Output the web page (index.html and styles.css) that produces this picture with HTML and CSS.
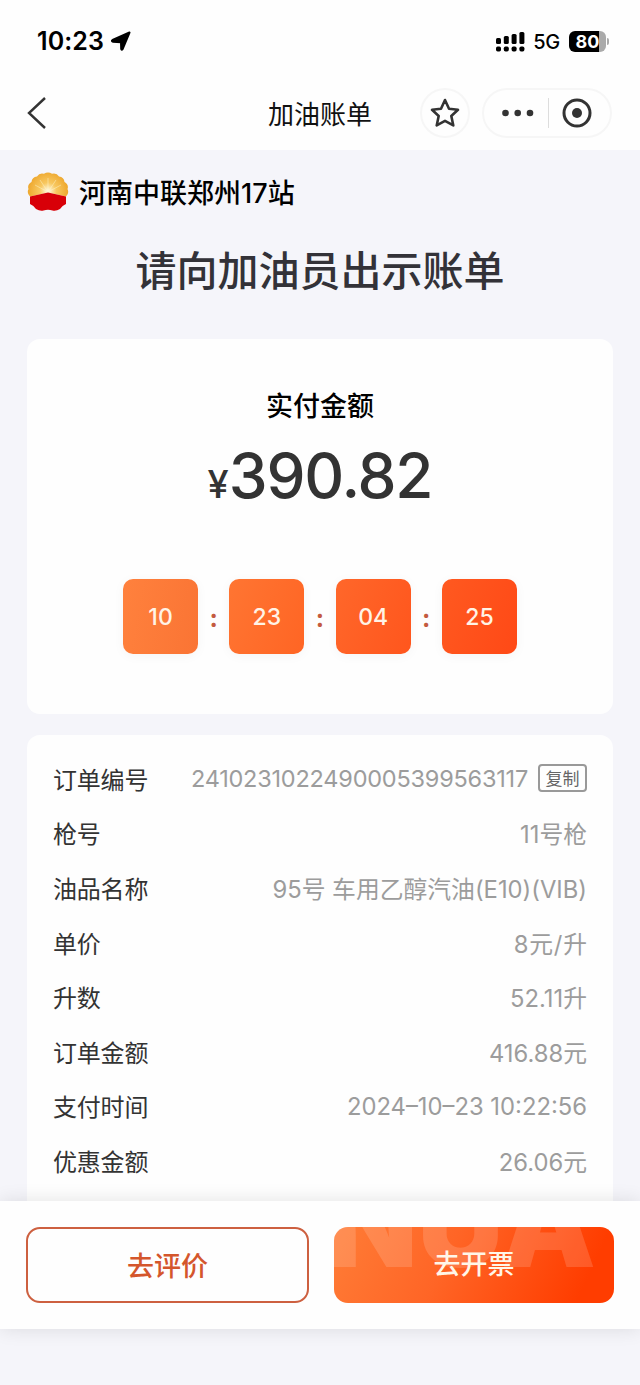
FILE: index.html
```html
<!DOCTYPE html>
<html lang="zh-CN">
<head>
<meta charset="utf-8">
<title>加油账单</title>
<link rel="stylesheet" href="styles.css">
</head>
<body>
<div class="screen">
  <header class="top">
    <div class="status">
      <span class="clock">10:23</span>
      <svg class="location" width="20" height="21" viewBox="0 0 20 21"><path d="M18.500 1.500 11.500 18.300Q10.700 19.500 10.200 18L10 11.200 1.800 10.700Q.2 9.800 1.600 9z" stroke="#000" stroke-width="2" stroke-linejoin="round"/></svg>
      <div class="status-right">
        <svg width="29" height="21" viewBox="0 0 29 21"><rect x="0" y="7" width="5" height="6" rx="1.500"/><rect x="7.800" y="5" width="5" height="8" rx="1.500"/><rect x="15.600" y="3" width="5" height="10" rx="1.500"/><rect x="23.400" y="1" width="5" height="12" rx="1.500"/><rect x="0" y="15.500" width="5" height="5" rx="1.700"/><rect x="7.800" y="15.500" width="5" height="5" rx="1.700"/><rect x="15.600" y="15.500" width="5" height="5" rx="1.700"/><rect x="23.400" y="15.500" width="5" height="5" rx="1.700"/></svg>
        <span class="network">5G</span>
        <span class="battery">80</span><span class="battery-tip"></span>
      </div>
    </div>
    <nav class="nav">
      <svg class="back" width="20" height="32" viewBox="0 0 20 32" fill="none" stroke="#333" stroke-width="2.400"><path d="M18 1 2 16l16 15"/></svg>
      <h1 class="nav-title">加油账单</h1>
      <div class="star"><svg width="32" height="32" viewBox="0 0 32 32" fill="none" stroke="#333" stroke-width="2.600" stroke-linejoin="round"><path d="m16 3 4 8.800 9 1-6.700 6.200 2 9.400L16 23.900l-8.300 4.500 2-9.400L3 12.800l9-1z"/></svg></div>
      <div class="capsule">
        <svg width="34" height="8" viewBox="0 0 34 8" fill="#333"><circle cx="4.500" cy="4" r="3.300"/><circle cx="16.700" cy="4" r="3.300"/><circle cx="29" cy="4" r="3.300"/></svg>
        <span class="capsule-line"></span>
        <svg width="30" height="30" viewBox="0 0 30 30"><circle cx="15" cy="15" r="13" fill="none" stroke="#333" stroke-width="3"/><circle cx="15" cy="15" r="5" fill="#333"/></svg>
      </div>
    </nav>
  </header>
  <main class="content">
    <div class="station">
      <svg width="42" height="40" viewBox="0 0 42 40">
        <defs>
          <radialGradient id="sun" gradientUnits="userSpaceOnUse" cx="21" cy="19" r="21"><stop offset="0" stop-color="#fffbe5"/><stop offset=".4" stop-color="#f8c860"/><stop offset="1" stop-color="#eda52a"/></radialGradient>
        </defs>
        <path fill="url(#sun)" d="M3 24.500Q-.5 21.500 1.500 17Q0 12.500 4.500 10Q5 5 10 4.500Q12.500 .5 17 1.800Q21 -.8 25 1.800Q29.500 .5 32 4.500Q37 5 37.500 10Q42 12.500 40.500 17Q42.500 21.500 39 24.500L21 20.500Z"/>
        <path d="m21 20 0-14M21 20 13 8M21 20 29 8M21 20 8 13M21 20 34 13" stroke="#fff6cf" stroke-width=".8" opacity=".6"/>
        <path fill="#d80008" d="M3 24.500Q12 22.500 21 20.500Q30 22.500 39 24.500L39 32Q34.500 34 33 37Q29 39.500 25.500 38.500Q21 37 16.500 38.500Q13 39.500 9 37Q7.500 34 3 32Z"/>
      </svg>
      <span class="station-name">河南中联郑州17站</span>
    </div>
    <h2 class="notice">请向加油员出示账单</h2>
    <section class="card pay">
      <div class="pay-label">实付金额</div>
      <div class="amount"><span class="yen">¥</span><span class="sum">390.82</span></div>
      <div class="timer">
        <span class="box b1">10</span><span class="colon">:</span><span class="box b2">23</span><span class="colon">:</span><span class="box b3">04</span><span class="colon">:</span><span class="box b4">25</span>
      </div>
    </section>
    <section class="card detail">
      <div class="row"><span class="key">订单编号</span><span class="value order">2410231022490005399563117</span><span class="copy">复制</span></div>
      <div class="row"><span class="key">枪号</span><span class="value">11号枪</span></div>
      <div class="row"><span class="key">油品名称</span><span class="value">95号 车用乙醇汽油(E10)(VIB)</span></div>
      <div class="row"><span class="key">单价</span><span class="value price">8元/升</span></div>
      <div class="row"><span class="key">升数</span><span class="value">52.11升</span></div>
      <div class="row"><span class="key">订单金额</span><span class="value">416.88元</span></div>
      <div class="row"><span class="key">支付时间</span><span class="value time">2024–10–23 10:22:56</span></div>
      <div class="row"><span class="key">优惠金额</span><span class="value">26.06元</span></div>
    </section>
  </main>
  <footer class="actions">
    <div class="btn review">去评价</div>
    <div class="btn invoice"><span class="mark">NUA</span><span class="btn-text">去开票</span></div>
  </footer>
</div>
</body>
</html>
```

FILE: styles.css
```css
* { box-sizing: border-box; }
body { margin: 0; background: #f5f5fa; font-family: Inter, "Noto Sans CJK SC", sans-serif; color: #333; }
.screen { width: 640px; height: 1385px; display: flex; flex-direction: column; overflow: hidden; }
.top { height: 150px; background: #fefefe; flex: none; }
.status { height: 82px; display: flex; align-items: center; padding: 0 31px 0 37px; color: #000; }
.clock { font-size: 25px; font-weight: 600; width: 74px; letter-spacing: .1px; }
.status-right { margin-left: auto; display: flex; align-items: center; }
.network { font-size: 20px; font-weight: 500; margin: 0 9px 0 8px; letter-spacing: -.3px; line-height: 24px; padding-top: 2px; }
.battery { width: 37px; height: 21px; border-radius: 6px; background: linear-gradient(90deg, #000 80%, #aaa 80%); color: #fff; font-size: 18px; font-weight: 700; line-height: 21px; text-align: center; }
.battery-tip { width: 2px; height: 7px; margin-left: 1px; border-radius: 0 3px 3px 0; background: #aaa; }
.nav { height: 62px; display: grid; grid-template-columns: 213px 160px 1fr 50px 12px 130px; align-items: center; padding: 0 28px 0 27px; }
.nav-title { grid-column: 2; margin: 0; padding-top: 3px; font-size: 26px; font-weight: 400; text-align: center; color: #111; line-height: 36px; }
.star { grid-column: 4; width: 50px; height: 50px; border: 2px solid #f6f6f6; border-radius: 25px; display: grid; place-items: center; }
.capsule { grid-column: 6; width: 130px; height: 50px; border: 2px solid #f6f6f6; border-radius: 25px; display: flex; align-items: center; justify-content: space-between; padding: 0 18px 0 17px; }
.capsule-line { width: 1px; height: 30px; background: #ddd; }
.content { flex: none; height: 1051px; padding: 0 27px; overflow: hidden; }
.station { height: 84px; display: flex; align-items: center; gap: 10px; color: #000; }
.station-name { font-size: 27px; font-weight: 500; line-height: 40px; padding-top: 3px; }
.notice { margin: 0; height: 105px; line-height: 75px; font-size: 41px; font-weight: 500; text-align: center; color: #333238; }
.card { width: 586px; border-radius: 13px; background: #fefefe; }
.pay { height: 375px; padding-top: 47px; display: flex; flex-direction: column; align-items: center; }
.pay-label { font-size: 27px; line-height: 42px; font-weight: 500; color: #000; }
.amount { display: flex; align-items: baseline; height: 80px; margin-top: 8px; line-height: 80px; }
.yen { font-size: 38px; font-weight: 500; }
.sum { font-size: 62px; font-weight: 500; letter-spacing: -1.200px; }
.timer { display: flex; margin-top: 63px; align-items: center; }
.box { width: 75px; height: 75px; border-radius: 10px; color: #fff3e6; font-size: 23px; font-weight: 500; line-height: 77px; text-align: center; box-shadow: 0 2px 12px #0000000a; }
.b1 { background: linear-gradient(100deg, #ff813d, #fa7434); }
.b2 { background: linear-gradient(110deg, #ff7532, #ff6524); }
.b3 { background: linear-gradient(110deg, #ff672a, #ff561d); }
.b4 { background: linear-gradient(110deg, #ff5920, #ff4916); }
.colon { width: 31.300px; padding-top: 2px; text-align: center; font-size: 25px; font-weight: 700; color: #c45b40; }
.detail { margin-top: 21px; height: 480px; padding: 16px 26px 0; }
.row { height: 54.600px; display: flex; align-items: center; white-space: nowrap; }
.key { font-size: 24px; color: #333; letter-spacing: -.2px; }
.value { margin-left: auto; font-size: 23.800px; color: #9c9c9c; font-weight: 400; }
.order { font-size: 23.500px; letter-spacing: -.22px; padding-top: 1px; }
.price { letter-spacing: .8px; margin-right: -.8px; }
.time { padding-top: 2px; }
.copy { width: 49px; height: 28px; border: 2px solid #999; border-radius: 4px; margin-left: 10px; font-size: 17px; line-height: 27px; text-align: center; color: #666; }
.actions { position: relative; flex: none; height: 128px; background: #fefefe; box-shadow: 0 0 18px #0000001c; padding: 26px 26px 0; display: flex; gap: 25px; }
.btn { height: 76px; border-radius: 14px; font-size: 27px; font-weight: 500; line-height: 76px; text-align: center; }
.review { width: 283px; border: 2px solid #cd6040; color: #d4562c; }
.invoice { position: relative; width: 280px; overflow: hidden; color: #fff6e8; background: linear-gradient(115deg, #ff7c36, #ff6526 40%, #ff3d00 88%); }
.mark { position: absolute; left: -8px; top: -73px; font-size: 119px; line-height: 140px; font-weight: 900; color: #ffffff26; white-space: nowrap; }
.btn-text { position: relative; }
```
